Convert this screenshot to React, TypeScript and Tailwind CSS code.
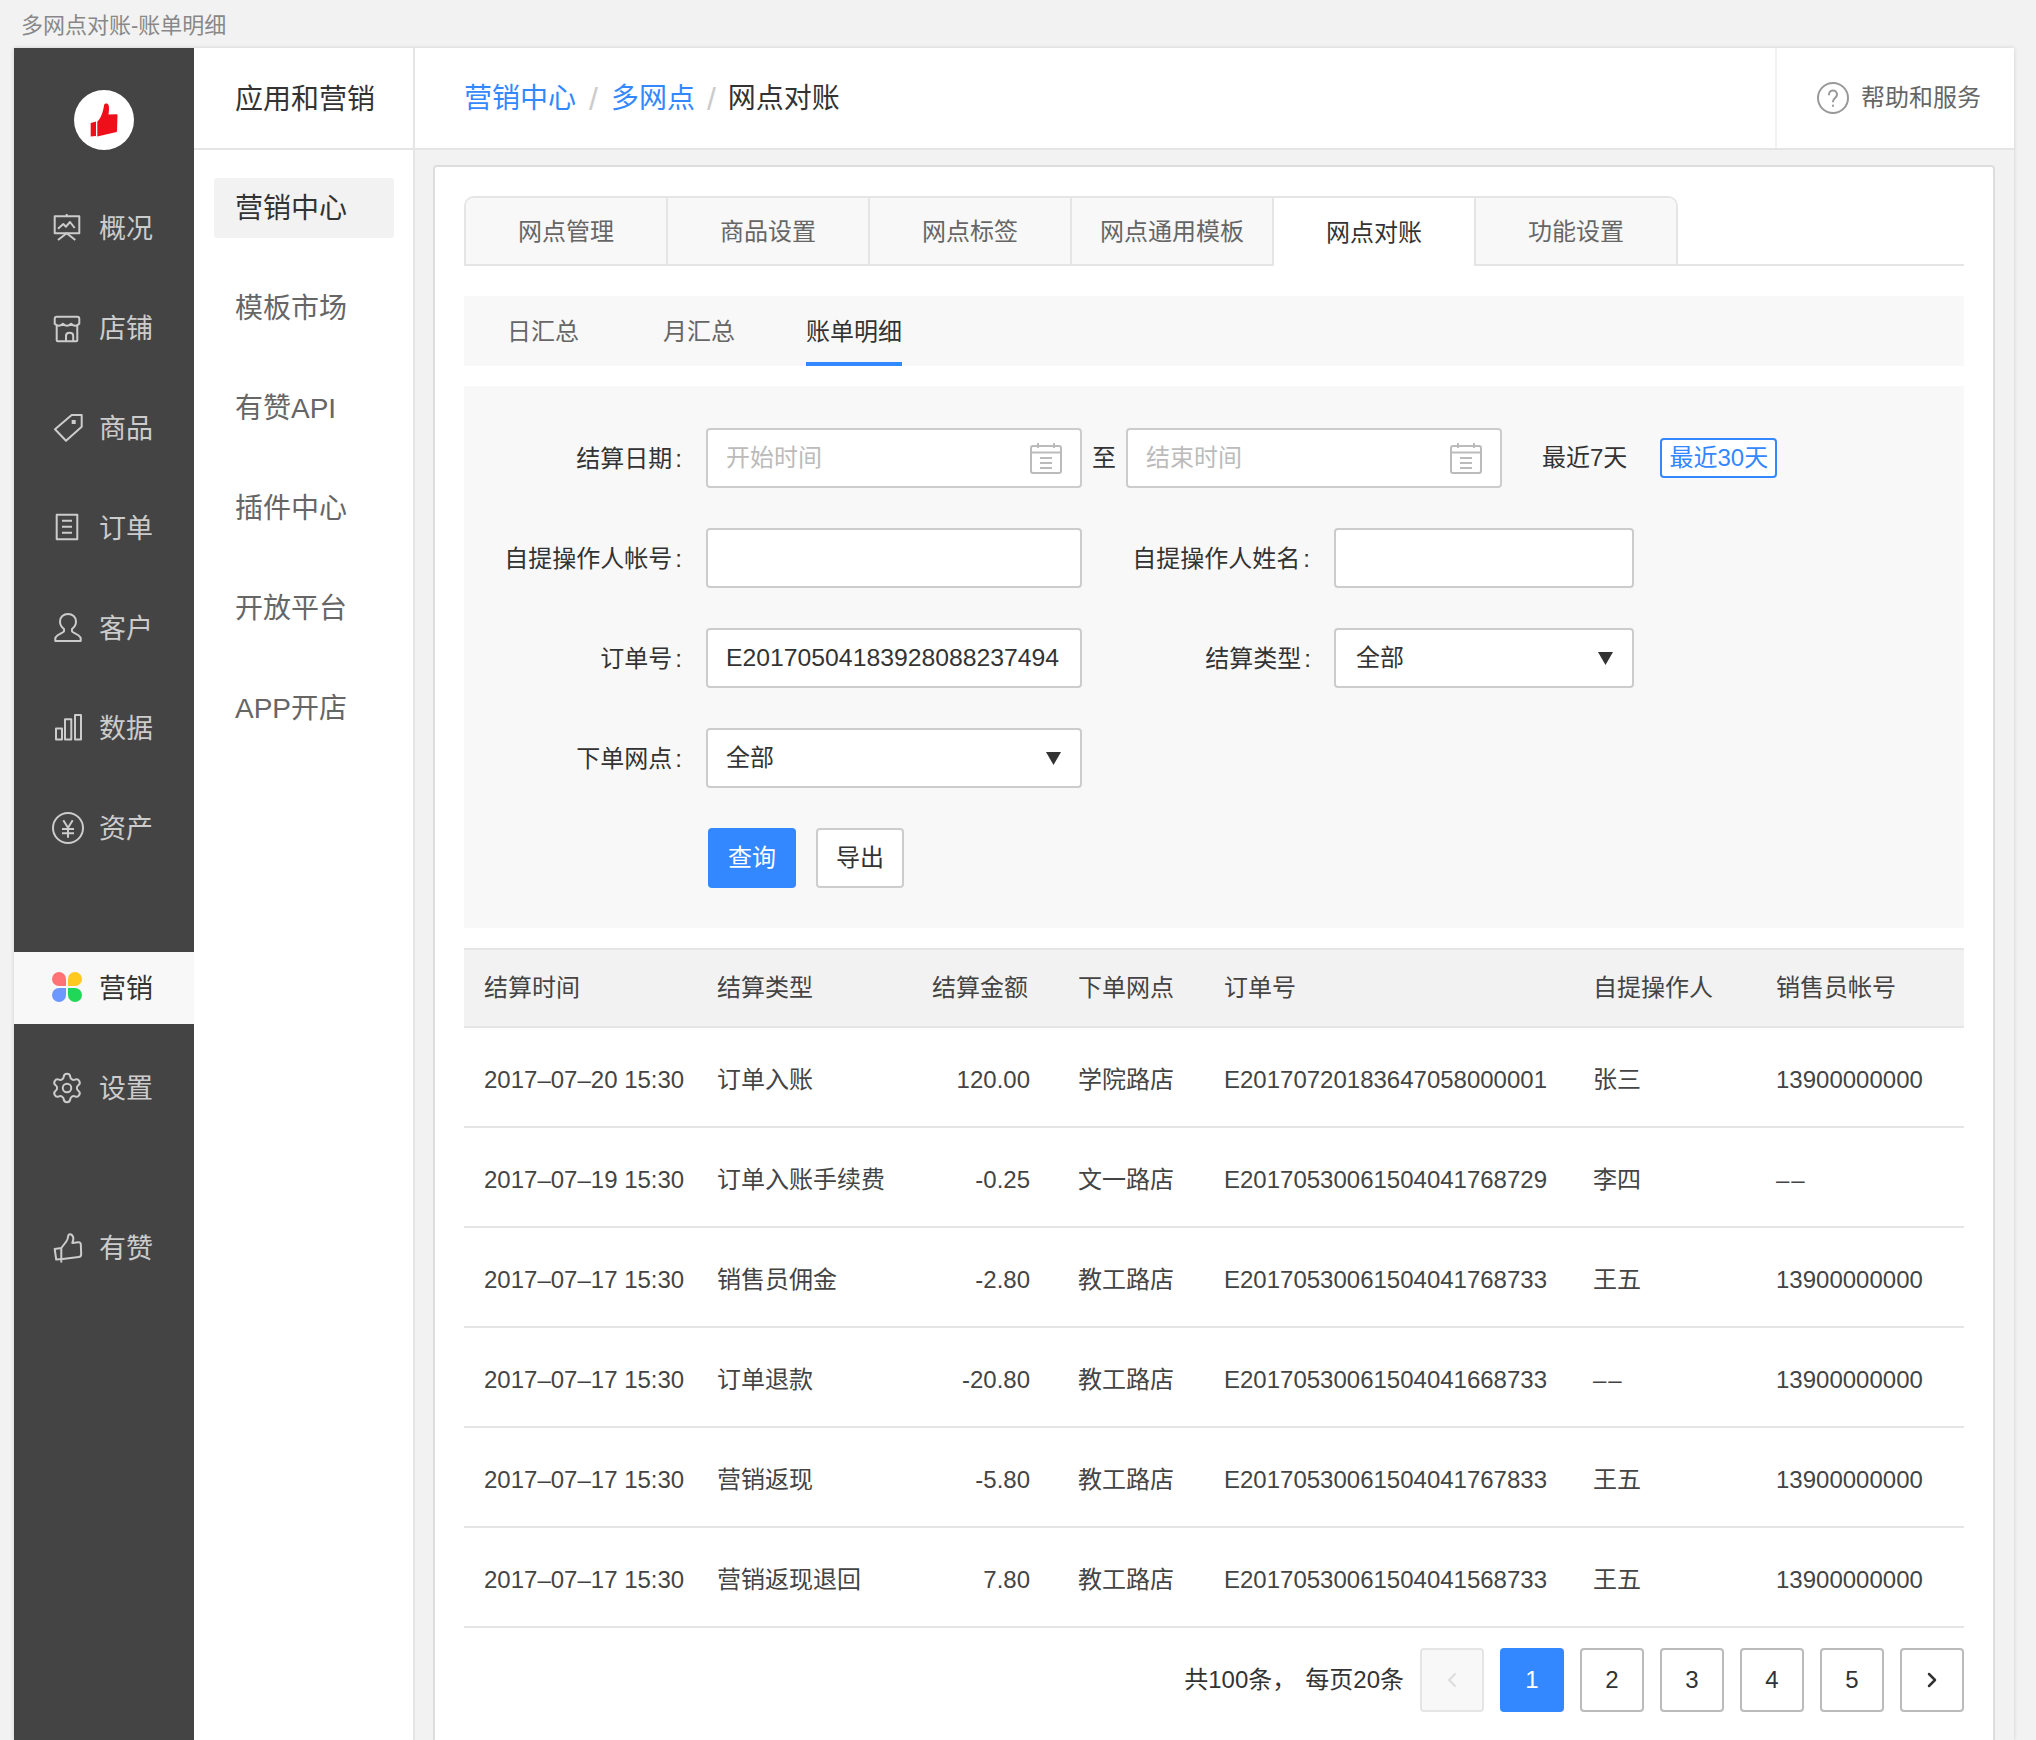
import type { ReactNode } from 'react';
import { ChevronLeft, ChevronRight, Settings } from 'lucide-react';

const strokeProps = { fill: 'none', stroke: 'currentColor', strokeWidth: 2, strokeLinejoin: 'round' as const };

function Ico({ children, className = 'w-[32px] h-[32px]' }: { children: ReactNode; className?: string }) {
  return (
    <svg viewBox="0 0 32 32" className={className} {...strokeProps} overflow="visible">
      {children}
    </svg>
  );
}

const navIcons: Record<string, ReactNode> = {
  概况: (
    <Ico>
      <path d="M3.700 5.300h24.600v17H3.700z" />
      <path d="M15.700 3v2.300M7 17.700l5.300-4.700 2.700 2.700 4-4.700 4.700 6M7 29l8.700-6.700L24.300 29" />
    </Ico>
  ),
  店铺: (
    <Ico>
      <path d="M3.700 7.700q0-2 2-2h20.600q2 0 2 2v5q-4.100 4-8.200 0q-4.100 4-8.200 0q-4.100 4-8.200 0z" />
      <path d="M5.700 14.500v14.800q0 1 1 1h18.600q1 0 1-1v-14.800M15 30v-5.300q0-3 3.600-3t3.600 3v5.300" />
    </Ico>
  ),
  商品: (
    <Ico>
      <path d="M20.700 4h10v11.700L15 29.700 4 18.300z" />
      <rect x="20.700" y="9" width="4" height="4" fill="currentColor" stroke="none" />
    </Ico>
  ),
  订单: (
    <Ico>
      <path d="M5.700 3.700h20.600v24.600H5.700z" />
      <path d="M11 9.700h10M11 15.700h10M11 21.700h10" />
    </Ico>
  ),
  客户: (
    <Ico>
      <path d="M17 3c4.500 0 8 3 8 7.500 0 3.500-2 6-4 7.500v2.500c0 1 7 2.500 8.700 6.500v3H4.300v-3c1.700-4 8.700-5.500 8.700-6.500v-2.500c-2-1.500-4-4-4-7.500 0-4.500 3.500-7.500 8-7.500z" />
    </Ico>
  ),
  数据: (
    <Ico>
      <path d="M5 17.400h6v11.200H5zM14 8.300h6.300v20.300H14zM24 3.900h6v24.700h-6z" />
    </Ico>
  ),
  资产: (
    <Ico>
      <circle cx="17" cy="17" r="15" />
      <path d="M12.300 9.300l4.700 7.400 4.700-7.400M11 18h12M11 22.300h12M17 16.700v10" />
    </Ico>
  ),
  有赞: (
    <Ico>
      <path d="M3.700 17l6.600-1 5-6.500q1.500-2 2-6 .5-1.500 2-1.200 3.300 1 3 5l-1 3.700 6-.7q2.400-.2 2.500 2l.4 10q0 2.500-2.500 2.800l-16 1.900-6.500.5zM10.300 16v14.600" />
    </Ico>
  ),
};

const navTop = ['概况', '店铺', '商品', '订单', '客户', '数据', '资产'];
const subMenu = ['营销中心', '模板市场', '有赞API', '插件中心', '开放平台', 'APP开店'];
const tabs = ['网点管理', '商品设置', '网点标签', '网点通用模板', '网点对账', '功能设置'];

const columns = 'grid grid-cols-[233px_203px_158px_146px_369px_183px_208px] items-center';

const rows = [
  ['2017–07–20 15:30', '订单入账', '120.00', '学院路店', 'E20170720183647058000001', '张三', '13900000000'],
  ['2017–07–19 15:30', '订单入账手续费', '-0.25', '文一路店', 'E20170530061504041768729', '李四', '––'],
  ['2017–07–17 15:30', '销售员佣金', '-2.80', '教工路店', 'E20170530061504041768733', '王五', '13900000000'],
  ['2017–07–17 15:30', '订单退款', '-20.80', '教工路店', 'E20170530061504041668733', '––', '13900000000'],
  ['2017–07–17 15:30', '营销返现', '-5.80', '教工路店', 'E20170530061504041767833', '王五', '13900000000'],
  ['2017–07–17 15:30', '营销返现退回', '7.80', '教工路店', 'E20170530061504041568733', '王五', '13900000000'],
];

function Logo() {
  return (
    <div className="h-[60px] w-[60px] rounded-full bg-white">
      <svg viewBox="0 0 60 60" className="h-[60px] w-[60px]" fill="#ef0f1a">
        <path d="M23.300 31.500c3-2 6-10 6.700-16 .3-2.500 3.500-2.500 4.500-.5.8 2 .5 6 0 9.500l8-.3c.8 0 1 .5 1 1l-.5 15.500c0 1-.7 1.500-1.500 1.500l-18.200 4.300z" />
        <path d="M16.700 33l5.300-1.500v14.500l-5.300.4z" />
      </svg>
    </div>
  );
}

function Calendar() {
  return (
    <svg viewBox="0 0 32 32" className="h-[32px] w-[32px] text-[#bbb]" {...strokeProps}>
      <rect x="1" y="4" width="30" height="27" rx="2" />
      <path d="M1 10.500h30M8 1v5M24 1v5M10 16h12M10 21h12M10 26h12" />
    </svg>
  );
}

function Caret() {
  return (
    <svg viewBox="0 0 15 13" className="h-[13px] w-[15px]" fill="#333">
      <path d="M0 0h15l-7.500 13z" />
    </svg>
  );
}

function DateInput({ placeholder }: { placeholder: string }) {
  return (
    <div className="flex h-[60px] w-[376px] items-center justify-between rounded-[4px] border-2 border-[#ccc] bg-white pl-[18px] pr-[18px]">
      <span className="text-[#bbb]">{placeholder}</span>
      <Calendar />
    </div>
  );
}

function TextBox({ value = '', width = 'w-[376px]' }: { value?: string; width?: string }) {
  return (
    <div className={`flex h-[60px] ${width} items-center rounded-[4px] border-2 border-[#ccc] bg-white pl-[18px] text-[24.75px]`}>
      {value}
    </div>
  );
}

function SelectBox({ width }: { width: string }) {
  return (
    <div className={`flex h-[60px] ${width} items-center justify-between rounded-[4px] border-2 border-[#ccc] bg-white pr-[19px]`}>
      全部
      <Caret />
    </div>
  );
}

function Label({ text, width = 'w-[218px]' }: { text: string; width?: string }) {
  return (
    <div className={`${width} pt-[2px] text-right`}>
      {text}
      <span className="ml-[3px]">:</span>
    </div>
  );
}

export default function App() {
  return (
    <div className="h-[1740px] w-[2036px] overflow-hidden bg-[#f2f2f2] font-['Liberation_Sans','Noto_Sans_CJK_SC',sans-serif] text-[24px] text-[#333]">
      <div className="h-[48px] pl-[21px] pt-[9px] text-[22px] leading-[34px] text-[#888]">多网点对账-账单明细</div>

      <div className="ml-[14px] flex h-[1692px] w-[2000px] shadow-[0_0_4px_rgba(0,0,0,0.15)]">
        {/* dark nav */}
        <div className="w-[180px] shrink-0 bg-[#444] pt-[42px] text-[27px] text-[#ccc]">
          <div className="mb-[27px] flex justify-center">
            <Logo />
          </div>
          {navTop.map(name => (
            <div key={name} className="flex h-[100px] items-center gap-[16px] pl-[37px]">
              {navIcons[name]}
              <span className="pt-[4px]">{name}</span>
            </div>
          ))}
          <div className="mt-[75px] flex h-[72px] items-center gap-[16px] bg-[#f8f8f8] pl-[37px] text-[#333]">
            <svg viewBox="0 0 32 32" className="h-[32px] w-[32px]">
              <path d="M15 14H8a7 7 0 1 1 7-7z" fill="#ff7276" />
              <path d="M17 14h7a7 7 0 1 0-7-7z" fill="#ffc91f" />
              <path d="M15 16H8a7 7 0 1 0 7 7z" fill="#6c98ff" />
              <path d="M17 16h7a7 7 0 1 1-7 7z" fill="#20d757" />
            </svg>
            <span className="pt-[3px]">营销</span>
          </div>
          <div className="mt-[14px] flex h-[100px] items-center gap-[16px] pl-[37px]">
            <Settings size={34} strokeWidth={1.4} className="-m-px" />
            <span className="pt-[3px]">设置</span>
          </div>
          <div className="mt-[60px] flex h-[100px] items-center gap-[16px] pl-[37px]">
            {navIcons['有赞']}
            <span className="pt-[3px]">有赞</span>
          </div>
        </div>

        {/* second menu */}
        <div className="w-[221px] shrink-0 border-r-2 border-[#e5e5e5] bg-white text-[28px]">
          <div className="flex h-[102px] items-center border-b-2 border-[#e5e5e5] pl-[41px] pt-[3px] text-[#333]">应用和营销</div>
          <div className="flex flex-col gap-[40px] pl-[20px] pt-[28px]">
            {subMenu.map((item, i) => (
              <div
                key={item}
                className={i === 0 ? 'flex h-[60px] w-[180px] items-center rounded-[4px] bg-[#f2f2f2] pl-[21px] pt-[2px] text-[#333]' : 'flex h-[60px] w-[180px] items-center pl-[21px] pt-[2px] text-[#666]'}
              >
                {item}
              </div>
            ))}
          </div>
        </div>

        <div className="flex min-w-0 flex-1 flex-col">
          {/* breadcrumb */}
          <div className="flex h-[102px] shrink-0 items-center border-b-2 border-[#e5e5e5] bg-white">
            <div className="flex flex-1 items-center pl-[49px] pt-[2px] text-[28px]">
              <span className="text-[#38f]">营销中心</span>
              <span className="mx-[13px] text-[32px] leading-none text-[#ccc]">/</span>
              <span className="text-[#38f]">多网点</span>
              <span className="mx-[12px] text-[32px] leading-none text-[#ccc]">/</span>
              <span className="text-[#333]">网点对账</span>
            </div>
            <div className="flex h-full w-[239px] items-center gap-[12px] border-l-2 border-[#f2f2f2] pl-[40px] text-[#666]">
              <svg viewBox="0 0 32 32" className="h-[32px] w-[32px] text-[#999]" {...strokeProps} strokeLinecap="round">
                <circle cx="16" cy="16" r="15" />
                <path d="M12 12.500c0-2.500 2-4 4-4s4 1.500 4 4c0 3.500-4 3.500-4 7M16 23.500v.5" />
              </svg>
              帮助和服务
            </div>
          </div>

          {/* panel */}
          <div className="ml-[18px] mt-[15px] h-[1600px] w-[1562px] shrink-0 rounded-t-[4px] border-2 border-[#ddd] bg-white pl-[29px] pt-[29px]">
            <div className="flex w-[1500px] border-b-2 border-[#e5e5e5]">
              <div className="-mb-[2px] flex overflow-hidden rounded-t-[10px] border-t-2 border-l-2 border-r-2 border-[#e5e5e5]">
                {tabs.map((tab, i) => (
                  <div
                    key={tab}
                    className={
                      tab === '网点对账'
                        ? 'flex h-[68px] w-[202px] items-center justify-center border-r-2 border-[#e5e5e5] bg-white pt-[2px] text-[#333]'
                        : i === tabs.length - 1
                          ? 'flex h-[68px] w-[200px] items-center justify-center border-b-2 border-[#e5e5e5] bg-[#f8f8f8] pt-[2px] text-[#666]'
                          : 'flex h-[68px] w-[202px] items-center justify-center border-r-2 border-b-2 border-[#e5e5e5] bg-[#f8f8f8] pt-[2px] text-[#666]'
                    }
                  >
                    {tab}
                  </div>
                ))}
              </div>
            </div>

            <div className="mt-[30px] flex h-[70px] w-[1500px] items-stretch bg-[#f8f8f8] pl-[43px] text-[#666]">
              <div className="flex items-center pt-[2px]">日汇总</div>
              <div className="ml-[84px] flex items-center pt-[2px]">月汇总</div>
              <div className="ml-[71px] flex items-center border-b-4 border-[#38f] pt-[6px] text-[#333]">账单明细</div>
            </div>

            <div className="mt-[20px] flex h-[542px] w-[1500px] flex-col gap-[40px] bg-[#f8f8f8] pt-[42px]">
              <div className="flex items-center">
                <Label text="结算日期" />
                <div className="ml-[24px]">
                  <DateInput placeholder="开始时间" />
                </div>
                <div className="ml-[10px] w-[34px]">至</div>
                <DateInput placeholder="结束时间" />
                <div className="ml-[40px]">最近7天</div>
                <div className="ml-[33px] flex h-[40px] w-[117px] items-center justify-center rounded-[4px] border-2 border-[#38f] bg-white text-[#38f]">最近30天</div>
              </div>
              <div className="flex items-center">
                <Label text="自提操作人帐号" />
                <div className="ml-[24px]">
                  <TextBox />
                </div>
                <Label text="自提操作人姓名" width="w-[228px]" />
                <div className="ml-[24px]">
                  <TextBox width="w-[300px]" />
                </div>
              </div>
              <div className="flex items-center">
                <Label text="订单号" />
                <div className="ml-[24px]">
                  <TextBox value="E20170504183928088237494" />
                </div>
                <Label text="结算类型" width="w-[229px]" />
                <div className="ml-[23px]">
                  <SelectBox width="w-[300px] pl-[20px]" />
                </div>
              </div>
              <div className="flex items-center">
                <Label text="下单网点" />
                <div className="ml-[24px]">
                  <SelectBox width="w-[376px] pl-[18px]" />
                </div>
              </div>
              <div className="ml-[244px] flex gap-[20px]">
                <div className="flex h-[60px] w-[88px] items-center justify-center rounded-[4px] bg-[#38f] text-white">查询</div>
                <div className="flex h-[60px] w-[88px] items-center justify-center rounded-[4px] border-2 border-[#ccc] bg-white">导出</div>
              </div>
            </div>

            {/* table */}
            <div className="mt-[20px] w-[1500px]">
              <div className={`${columns} h-[80px] border-y-2 border-[#e5e5e5] bg-[#f2f2f2] text-[#444]`}>
                <div className="pl-[20px]">结算时间</div>
                <div className="pl-[20px]">结算类型</div>
                <div className="pr-[30px] text-right">结算金额</div>
                <div className="pl-[20px]">下单网点</div>
                <div className="pl-[20px]">订单号</div>
                <div className="pl-[20px]">自提操作人</div>
                <div className="pl-[20px]">销售员帐号</div>
              </div>
              {rows.map(row => (
                <div key={row[4]} className={`${columns} h-[100px] border-b-2 border-[#e5e5e5] pt-[5px] text-[#444]`}>
                  <div className="pl-[20px]">{row[0]}</div>
                  <div className="pl-[20px]">{row[1]}</div>
                  <div className="pr-[28px] text-right">{row[2]}</div>
                  <div className="pl-[20px]">{row[3]}</div>
                  <div className="pl-[20px]">{row[4]}</div>
                  <div className={row[5] === '––' ? 'pl-[20px] tracking-[2px]' : 'pl-[20px]'}>{row[5]}</div>
                  <div className={row[6] === '––' ? 'pl-[20px] tracking-[2px]' : 'pl-[20px]'}>{row[6]}</div>
                </div>
              ))}
            </div>

            {/* pagination */}
            <div className="mt-[20px] flex w-[1500px] items-center justify-end gap-[16px]">
              <div className="flex gap-[9px]">
                <span>共100条，</span>
                <span>每页20条</span>
              </div>
              <div className="flex h-[64px] w-[64px] items-center justify-center rounded-[4px] border-2 border-[#e5e5e5] bg-[#f8f8f8] text-[#ddd]">
                <ChevronLeft size={24} strokeWidth={2} />
              </div>
              <div className="flex h-[64px] w-[64px] items-center justify-center rounded-[4px] bg-[#38f] text-white">1</div>
              {[2, 3, 4, 5].map(n => (
                <div key={n} className="flex h-[64px] w-[64px] items-center justify-center rounded-[4px] border-2 border-[#bbb] bg-white">
                  {n}
                </div>
              ))}
              <div className="flex h-[64px] w-[64px] items-center justify-center rounded-[4px] border-2 border-[#bbb] bg-white">
                <ChevronRight size={24} strokeWidth={2.500} />
              </div>
            </div>
          </div>
        </div>
      </div>
    </div>
  );
}
